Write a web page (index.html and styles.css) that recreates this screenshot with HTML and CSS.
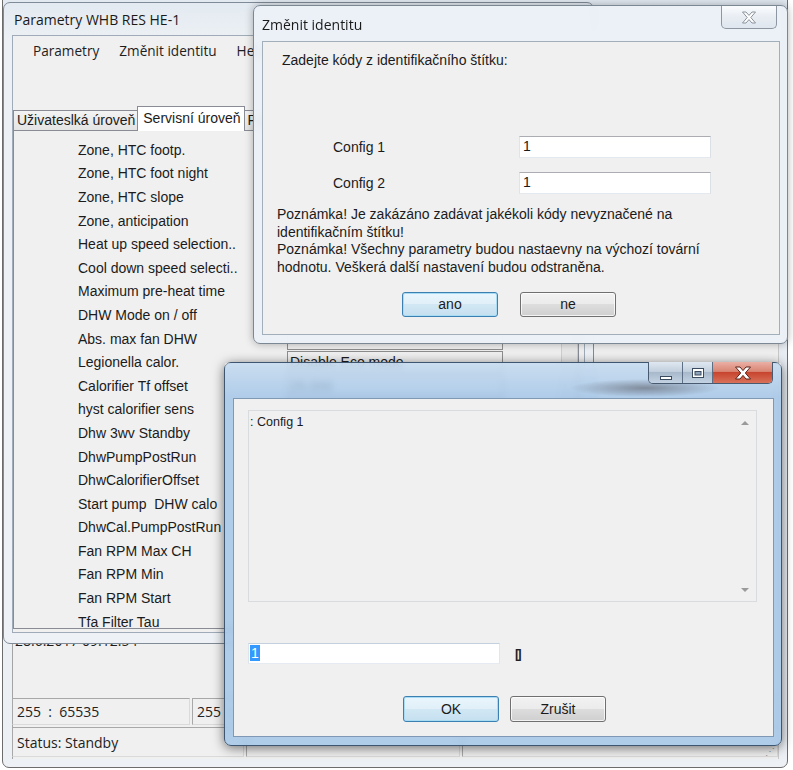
FILE: index.html
```html
<!DOCTYPE html>
<html lang="cs">
<head>
<meta charset="utf-8">
<title>Parametry WHB RES HE-1</title>
<link rel="stylesheet" href="styles.css">
</head>
<body>
<div class="desktop">

  <section class="win main">
    <div class="main-client">
      <div class="date">28.6.2017 09:12:54</div>
      <div class="stat-row">
        <div class="cell c1">255  :  65535</div>
        <div class="cell c2">255  :  65535</div>
        <div class="cell c3"></div>
      </div>
      <div class="stat-row status">
        <div class="cell c-status">Status: Standby</div>
        <div class="cell c-mid"></div>
        <div class="cell c-grip"><span class="grip">⋰</span></div>
      </div>
    </div>
  </section>

  <section class="win w1">
    <div class="titlebar"><span class="title">Parametry WHB RES HE-1</span></div>
    <div class="client">
      <nav class="menu"><span>Parametry</span><span>Změnit identitu</span><span>Help</span></nav>
      <div class="tabs">
        <span class="tab">Uživateslká úroveň</span>
        <span class="tab active">Servisní úroveň</span>
        <span class="tab">Pokročilá úroveň</span>
      </div>
      <div class="tabpage">
        <div class="rows">
          <div class="row"><span class="lbl">Zone, HTC footp.</span><span class="val"></span></div>
          <div class="row"><span class="lbl">Zone, HTC foot night</span><span class="val"></span></div>
          <div class="row"><span class="lbl">Zone, HTC slope</span><span class="val"></span></div>
          <div class="row"><span class="lbl">Zone, anticipation</span><span class="val"></span></div>
          <div class="row"><span class="lbl">Heat up speed selection..</span><span class="val"></span></div>
          <div class="row"><span class="lbl">Cool down speed selecti..</span><span class="val"></span></div>
          <div class="row"><span class="lbl">Maximum pre-heat time</span><span class="val"></span></div>
          <div class="row"><span class="lbl">DHW Mode on / off</span><span class="val"></span></div>
          <div class="row"><span class="lbl">Abs. max fan DHW</span><span class="val"></span></div>
          <div class="row"><span class="lbl">Legionella calor.</span><span class="val">Disable Eco mode</span></div>
          <div class="row"><span class="lbl">Calorifier Tf offset</span><span class="val">25.000</span></div>
          <div class="row"><span class="lbl">hyst calorifier sens</span><span class="val"></span></div>
          <div class="row"><span class="lbl">Dhw 3wv Standby</span><span class="val"></span></div>
          <div class="row"><span class="lbl">DhwPumpPostRun</span><span class="val"></span></div>
          <div class="row"><span class="lbl">DhwCalorifierOffset</span><span class="val"></span></div>
          <div class="row"><span class="lbl">Start pump  DHW calo</span><span class="val"></span></div>
          <div class="row"><span class="lbl">DhwCal.PumpPostRun</span><span class="val"></span></div>
          <div class="row"><span class="lbl">Fan RPM Max CH</span><span class="val"></span></div>
          <div class="row"><span class="lbl">Fan RPM Min</span><span class="val"></span></div>
          <div class="row"><span class="lbl">Fan RPM Start</span><span class="val"></span></div>
          <div class="row"><span class="lbl">Tfa Filter Tau</span><span class="val"></span></div>
        </div>
        <div class="vscroll"></div>
      </div>
    </div>
  </section>

  <section class="win dlg1">
    <div class="titlebar">
      <span class="title">Změnit identitu</span>
      <span class="close-inactive">
        <svg width="16" height="13" viewBox="0 0 16 13"><polygon points="1.5,1 5,1 8,4.4 11,1 14.5,1 9.8,6.5 14.5,12 11,12 8,8.6 5,12 1.5,12 6.2,6.5" fill="#fff" stroke="#8a929c" stroke-width="1" stroke-linejoin="round"/></svg>
      </span>
    </div>
    <div class="client d1-client">
      <div class="prompt">Zadejte kódy z identifikačního štítku:</div>
      <div class="fields">
        <label>Config 1</label><div class="input">1</div>
        <label>Config 2</label><div class="input">1</div>
      </div>
      <div class="notes">
        <p>Poznámka! Je zakázáno zadávat jakékoli kódy nevyznačené na<br>identifikačním štítku!</p>
        <p>Poznámka! Všechny parametry budou nastaevny na výchozí tovární<br>hodnotu. Veškerá další nastavení budou odstraněna.</p>
      </div>
      <div class="btnrow btnrow1">
        <button class="btn default">ano</button>
        <button class="btn">ne</button>
      </div>
    </div>
  </section>

  <section class="win dlg2">
    <div class="titlebar">
      <div class="caption">
        <span class="cb cb-min"><svg width="14" height="8" viewBox="0 0 14 8"><rect x="1.5" y="3.5" width="11" height="3" fill="#fff" stroke="#3a4b5f"/></svg></span>
        <span class="cb cb-max"><svg width="14" height="12" viewBox="0 0 14 12"><rect x="1.5" y="1.5" width="11" height="9" fill="#fff" stroke="#3a4b5f"/><rect x="4" y="4.5" width="6" height="3.5" fill="#8ea3bb" stroke="#3a4b5f"/></svg></span>
        <span class="cb cb-close"><svg width="18" height="14" viewBox="0 0 18 14"><polygon points="1.5,1 6,1 9,4.6 12,1 16.5,1 11.3,7 16.5,13 12,13 9,9.4 6,13 1.5,13 6.7,7" fill="#fff" stroke="#5b2219" stroke-width="1" stroke-linejoin="round"/></svg></span>
      </div>
    </div>
    <div class="client d2-client">
      <div class="log">
        <div class="log-text">: Config 1</div>
        <div class="log-scroll"><span class="arr up"></span><span class="arr down"></span></div>
      </div>
      <div class="entry">
        <div class="input wide"><span class="sel">1</span></div>
        <span class="notdef">[]</span>
      </div>
      <div class="btnrow btnrow2">
        <button class="btn default">OK</button>
        <button class="btn">Zrušit</button>
      </div>
    </div>
  </section>

</div>
</body>
</html>
```

FILE: styles.css
```css
* { box-sizing: border-box; }

body {
  margin: 0;
  background: #ffffff;
  font-family: "Liberation Sans", Arial, sans-serif;
  font-size: 14px;
  color: #1b1b1b;
}

.desktop {
  position: relative;
  width: 793px;
  height: 770px;
  overflow: hidden;
  background: #ffffff;
}

/* ---------- generic window ---------- */
.win {
  position: absolute;
  display: flex;
  flex-direction: column;
  border: 1px solid #7b8796;
  border-radius: 7px;
}

.titlebar {
  display: flex;
  align-items: flex-start;
  flex: none;
}

.title {
  font-family: "Open Sans", "Noto Sans", sans-serif;
  font-size: 14px;
  color: #1a1a1a;
  white-space: nowrap;
}

.client {
  flex: 1;
  background: #f0f0f0;
  border: 1px solid #9fabb8;
  display: flex;
  flex-direction: column;
  min-height: 0;
}

/* ---------- main (background) window ---------- */
.main {
  z-index: 1;
  left: 2px;
  top: -12px;
  width: 786px;
  height: 780px;
  padding: 40px 8px 8px 9px;
  border-color: #6c6c6c;
  background: linear-gradient(#e2e9f1, #edf1f5);
}

.main-client {
  flex: 1;
  background: #f0f0f0;
  display: flex;
  flex-direction: column;
  justify-content: flex-end;
  padding-bottom: 2px;
  border-left: 1px solid #a4a4a4;
  border-right: 1px solid #c9c9c9;
}

.date {
  font-family: "Open Sans", "Noto Sans", sans-serif;
  font-size: 14px;
  line-height: 15px;
  padding-left: 2px;
  margin-bottom: 50px;
}

.stat-row {
  display: flex;
  gap: 2px;
  height: 27px;
  margin-bottom: 2px;
}

.stat-row.status {
  height: 30px;
  margin-bottom: 0;
}

.cell {
  border: 1px solid #a8a8a8;
  border-right-color: #dadada;
  border-bottom-color: #dadada;
  padding-left: 4px;
  display: flex;
  align-items: center;
  white-space: pre;
  font-family: "Open Sans", "Noto Sans", sans-serif;
  font-size: 14px;
  color: #222;
}

.c1 { width: 178px; margin-left: -1px; }
.c2 { width: 250px; }
.c3 { flex: 1; }
.c-status { width: 232px; margin-left: -1px; }
.c-mid { width: 214px; }
.c-grip { flex: 1; justify-content: flex-end; align-items: flex-end; padding-right: 2px; }
.grip { font-size: 10px; color: #9a9a9a; line-height: 10px; }

/* ---------- window 1 ---------- */
.w1 {
  z-index: 2;
  left: 3px;
  top: 2px;
  width: 591px;
  height: 642px;
  padding: 0 8px 10px 8px;
  border-color: #808b98;
  background: linear-gradient(#e3eaf1, #edf1f5 40px, #eef2f6);
}

.w1 .titlebar {
  height: 32px;
  align-items: center;
  padding-left: 2px;
}

.menu {
  height: 28px;
  display: flex;
  align-items: center;
  padding-left: 10px;
  font-family: "Open Sans", "Noto Sans", sans-serif;
  font-size: 13.6px;
  color: #1e1e1e;
}

.menu span { padding: 0 10px; }

.tabs {
  margin-top: 42px;
  height: 24px;
  display: flex;
  align-items: flex-end;
  position: relative;
  z-index: 1;
}

.tab {
  height: 20px;
  border: 1px solid #898c95;
  border-bottom: none;
  padding: 1px 2px 0 3px;
  background: linear-gradient(#f3f3f3, #e4e4e4);
  white-space: nowrap;
  color: #1b1b1b;
}

.tab + .tab { margin-left: -1px; }

.tab.active {
  height: 25px;
  margin-bottom: -1px;
  background: #ffffff;
  padding: 3px 3px 0 5px;
}

.tabpage {
  flex: 1;
  margin: 0 5px 3px 0;
  border: 1px solid #898c95;
  background: #f0f0f0;
  display: flex;
  overflow: hidden;
  min-height: 0;
}

.rows {
  flex: 1;
  padding: 7px 0 0 64px;
}

.row {
  height: 23.6px;
  display: grid;
  grid-template-columns: 209px 216px;
  align-items: center;
}

.lbl {
  white-space: pre;
  color: #1b1b1b;
}

.val {
  height: 22px;
  border: 1px solid #8e8e8e;
  background: #f0f0f0;
  padding-left: 2px;
  line-height: 20px;
  white-space: nowrap;
  overflow: hidden;
}

.vscroll {
  width: 17px;
  border-left: 1px solid #d0d0d0;
  border-right: 1px solid #d0d0d0;
  background: #e8e8e8;
}

/* ---------- dialog 1 ---------- */
.dlg1 {
  z-index: 3;
  left: 253px;
  top: 5px;
  width: 535px;
  height: 339px;
  padding: 0 7px 8px 8px;
  border-color: #7c8794;
  background: rgba(236, 241, 247, 0.93);
  backdrop-filter: blur(4px);
  box-shadow: 0 0 9px rgba(0, 0, 0, 0.3);
}

.dlg1 .titlebar { height: 35px; }
.dlg1 .title { margin-top: 9px; }

.close-inactive {
  margin-left: auto;
  margin-right: 3px;
  width: 56px;
  height: 23px;
  border: 1px solid #8d96a1;
  border-top: none;
  border-radius: 0 0 5px 5px;
  background: linear-gradient(#fbfcfe, #e8edf3 50%, #dfe6ee);
  display: flex;
  align-items: center;
  justify-content: center;
}

.d1-client { border-color: #a3aebb; }

.prompt {
  margin: 11px 0 0 19px;
  line-height: 15px;
}

.fields {
  margin-top: 68px;
  padding-left: 70px;
  display: grid;
  grid-template-columns: 186px 192px;
  grid-auto-rows: 22px;
  row-gap: 14px;
  align-items: center;
}

.input {
  height: 22px;
  background: #ffffff;
  border: 1px solid;
  border-color: #abadb3 #dbdfe6 #e3e9ef #e2e3ea;
  padding-left: 3px;
  line-height: 19px;
}

.notes {
  margin: 12px 0 0 14px;
  line-height: 17.7px;
}

.notes p { margin: 0; }

.btnrow {
  display: flex;
}

.btnrow1 {
  margin: 15px 0 0 139px;
  gap: 22px;
}

.btn {
  font-family: "Liberation Sans", Arial, sans-serif;
  font-size: 14px;
  color: #1b1b1b;
  height: 25px;
  width: 96px;
  padding: 0;
  border: 1px solid #707070;
  border-radius: 3px;
  background: linear-gradient(#f2f2f2 0%, #ebebeb 49%, #dddddd 50%, #cfcfcf 100%);
  box-shadow: inset 0 0 0 1px rgba(255, 255, 255, 0.75);
}

.btn.default {
  border-color: #3c7fb1;
  box-shadow: inset 0 0 0 1px #a8dcf5;
  background: linear-gradient(#eaf6fd 0%, #e0eff8 49%, #d1e7f4 50%, #c6e0f0 100%);
}

/* ---------- dialog 2 ---------- */
.dlg2 {
  z-index: 4;
  left: 224px;
  top: 362px;
  width: 558px;
  height: 384px;
  padding: 0 7px 8px 8px;
  border-color: #3e5670;
  background: rgba(160, 195, 230, 0.82);
  backdrop-filter: blur(3px);
  box-shadow: 0 2px 12px rgba(0, 0, 0, 0.55);
}

.dlg2 .titlebar {
  height: 35px;
  justify-content: flex-end;
  margin: 0 -7px 0 -8px;
  padding-right: 8px;
  background:
    radial-gradient(ellipse 75px 9px at 420px 25px, rgba(60, 55, 60, 0.45), transparent),
    linear-gradient(rgba(255, 255, 255, 0.35), rgba(255, 255, 255, 0));
}

.caption {
  display: flex;
  height: 22px;
  border: 1px solid #475a70;
  border-top: none;
  border-radius: 0 0 5px 5px;
  overflow: hidden;
  margin-top: -1px;
}

.cb {
  display: flex;
  align-items: center;
  justify-content: center;
  height: 100%;
}

.cb-min {
  width: 34px;
  background: linear-gradient(#dfe8f1, #c2cfdd 45%, #a8b9cc 50%, #c4d3e2);
  border-right: 1px solid #5d6f84;
}

.cb-min svg { margin-top: 8px; }

.cb-max {
  width: 30px;
  background: linear-gradient(#dfe8f1, #c2cfdd 45%, #a8b9cc 50%, #c4d3e2);
  border-right: 1px solid #5d6f84;
}

.cb-close {
  width: 59px;
  background: linear-gradient(#eab0a4, #d88573 45%, #c7452e 50%, #d9715a);
}

.d2-client { border-color: #7f98b3; }

.log {
  margin: 11px 16px 0 14px;
  height: 192px;
  border: 1px solid #d9dcdf;
  background: #f0f0f0;
  display: flex;
  flex: none;
}

.log-text {
  flex: 1;
  padding: 4px 0 0 1px;
  line-height: 15px;
  font-size: 12.5px;
}

.log-scroll {
  width: 22px;
  display: flex;
  flex-direction: column;
  justify-content: space-between;
  align-items: center;
  padding: 10px 0 9px;
}

.arr {
  width: 0;
  height: 0;
  border-left: 4px solid transparent;
  border-right: 4px solid transparent;
}

.arr.up { border-bottom: 4px solid #9a9a9a; }
.arr.down { border-top: 4px solid #9a9a9a; }

.entry {
  display: flex;
  align-items: center;
  margin: 41px 0 0 14px;
}

.input.wide {
  width: 252px;
  height: 21px;
  border-color: #c3d0de #dfe6ee #e5ebf1 #dde4ec;
  padding-left: 1px;
  line-height: 18px;
}

.sel {
  background: #3399ff;
  color: #ffffff;
  padding: 0 1px;
}

.notdef {
  margin-left: 15px;
  font-size: 13px;
  font-weight: bold;
  letter-spacing: -2px;
  color: #222;
}

.btnrow2 {
  margin: 32px 0 0 169px;
  gap: 11px;
}

.btnrow2 .btn { height: 26px; }
```
